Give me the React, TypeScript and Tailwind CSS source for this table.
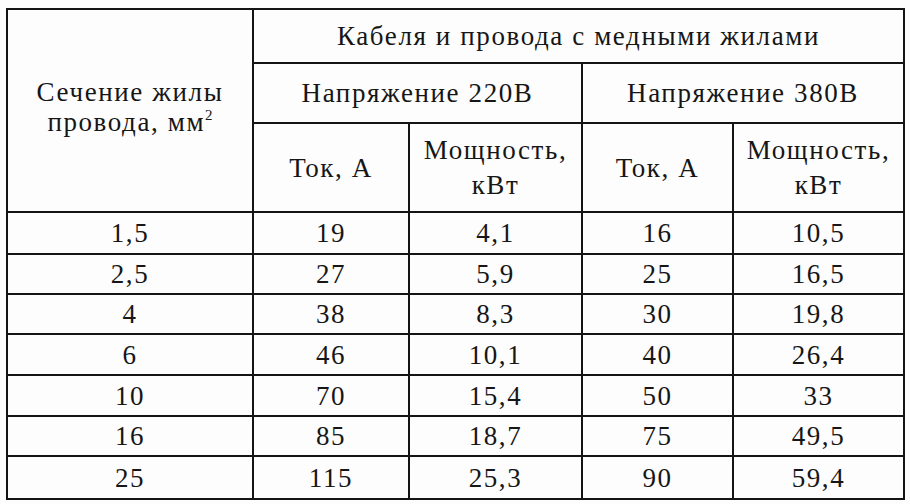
import React from "react";

const rows: string[][] = [
  ["1,5", "19", "4,1", "16", "10,5"],
  ["2,5", "27", "5,9", "25", "16,5"],
  ["4", "38", "8,3", "30", "19,8"],
  ["6", "46", "10,1", "40", "26,4"],
  ["10", "70", "15,4", "50", "33"],
  ["16", "85", "18,7", "75", "49,5"],
  ["25", "115", "25,3", "90", "59,4"],
];
const rowH = ["h-[42px]", "h-[40px]", "h-[40px]", "h-[41px]", "h-[41px]", "h-[40px]", "h-[43px]"];

export default function App() {
  const cell = "border-2 border-[#141414] text-center align-middle p-0";
  return (
    <div
      className="w-[910px] h-[504px] bg-[#fdfdfd] pt-[8px] pl-[6px] text-[#161616] text-[27px] leading-[30px] tracking-[1.6px]"
      style={{ fontFamily: '"Liberation Serif", "Times New Roman", serif' }}
    >
      <table className="border-collapse table-fixed w-[897px]">
        <colgroup>
          <col className="w-[246px]" />
          <col className="w-[156px]" />
          <col className="w-[173px]" />
          <col className="w-[151px]" />
          <col className="w-[171px]" />
        </colgroup>
        <tbody>
          <tr className="h-[54px]">
            <td rowSpan={3} className={cell + " leading-[30px] pb-[8px]"}>
              Сечение жилы
              <br />
              провода, мм<sup className="text-[15px] -top-[11px] tracking-normal">2</sup>
            </td>
            <td colSpan={4} className={cell}>
              Кабеля и провода с медными жилами
            </td>
          </tr>
          <tr className="h-[60px]">
            <td colSpan={2} className={cell}>
              Напряжение 220В
            </td>
            <td colSpan={2} className={cell}>
              Напряжение 380В
            </td>
          </tr>
          <tr className="h-[89px]">
            <td className={cell}>Ток, А</td>
            <td className={cell + " leading-[35px]"}>
              Мощность,
              <br />
              кВт
            </td>
            <td className={cell}>Ток, А</td>
            <td className={cell + " leading-[35px]"}>
              Мощность,
              <br />
              кВт
            </td>
          </tr>
          {rows.map((r, i) => (
            <tr key={i} className={rowH[i]}>
              {r.map((v, j) => (
                <td key={j} className={cell}>
                  {v}
                </td>
              ))}
            </tr>
          ))}
        </tbody>
      </table>
    </div>
  );
}
